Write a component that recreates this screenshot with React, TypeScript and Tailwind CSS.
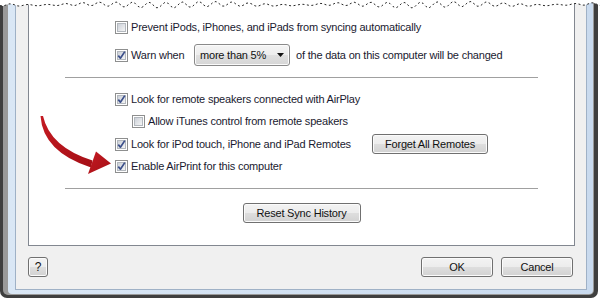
import React from "react";

const tornPts: string[] = [];
for (let x = 0; x <= 600; x += 3) {
  const y = 4.6 + 1.8 * Math.sin(x * 0.37) + 1.2 * Math.sin(x * 1.7 + 1) + 0.6 * Math.sin(x * 0.05);
  tornPts.push(`${x},${y.toFixed(1)}`);
}

function Check({ checked }: { checked?: boolean }) {
  return (
    <svg width="13" height="13" viewBox="0 0 13 13" className="shrink-0">
      <defs>
        <linearGradient id="cbg" x1="0" y1="0" x2="1" y2="1">
          <stop offset="0" stopColor="#c9ced6" />
          <stop offset="1" stopColor="#f7f7f7" />
        </linearGradient>
      </defs>
      <rect x="0.5" y="0.5" width="12" height="12" fill="#ffffff" stroke="#8e8f8f" />
      <rect x="2.5" y="2.5" width="8" height="8" fill="url(#cbg)" stroke="#b3b8be" />
      {checked && (
        <path d="M3.3 6.6 L5.4 9.2 L9.8 2.6" fill="none" stroke="#3b4f8a" strokeWidth="1.7" strokeLinejoin="round" />
      )}
    </svg>
  );
}

function WinButton({ children, className }: { children: React.ReactNode; className: string }) {
  return (
    <div
      className={`flex items-center justify-center rounded-[3px] border border-[#707070] bg-[linear-gradient(#f3f3f3_0%,#ececec_50%,#dedede_50%,#d2d2d2_100%)] shadow-[inset_0_0_0_1px_#fbfbfb] text-[#111111] ${className}`}
    >
      {children}
    </div>
  );
}

function Row({ children, className = "" }: { children: React.ReactNode; className?: string }) {
  return <div className={`flex h-[22px] items-center ${className}`}>{children}</div>;
}

export default function App() {
  return (
    <div className="relative h-[302px] w-[600px] overflow-hidden bg-white font-['Liberation_Sans',Arial,sans-serif] text-[11px] tracking-[-0.2px] text-[#1a1a30]">
      <div className="flex h-[298px] w-[598px] rounded-b-[7px] bg-[#3f3f3f] pb-[3px] pl-[3px] pr-[4px]">
        <div className="flex flex-1 rounded-b-[5px] bg-[#9a9a9a] pb-[1px] pl-[5px] pr-[1px]">
          <div className="flex flex-1 rounded-b-[4px] bg-[linear-gradient(to_right,#dae7f5,#c9daee)] pb-[4px] pl-[7px] pr-[6px]">
            <div className="flex flex-1 flex-col border-x border-b border-[#9fb1c6] bg-[#f0f0f0]">
              {/* content box */}
              <div className="ml-[12px] mr-[11px] flex h-[246px] flex-col border-x border-b border-[#828790] bg-white pl-[86px] pt-[16px]">
                <Row>
                  <Check />
                  <span className="ml-[3px]">Prevent iPods, iPhones, and iPads from syncing automatically</span>
                </Row>
                <Row className="mt-[6px]">
                  <Check checked />
                  <span className="ml-[3px] w-[63px]">Warn when</span>
                  <div className="flex h-[22px] w-[96px] items-center justify-between rounded-[3px] border border-[#8a8a8a] bg-[linear-gradient(#f4f4f4_0%,#ededed_50%,#e0e0e0_50%,#d6d6d6_100%)] pl-[5px] pr-[5px] shadow-[inset_0_0_0_1px_#fbfbfb]">
                    <span className="text-[#111]">more than 5%</span>
                    <svg width="7" height="4" viewBox="0 0 7 4">
                      <polygon points="0,0 7,0 3.5,4" fill="#111" />
                    </svg>
                  </div>
                  <span className="ml-[6px]">of the data on this computer will be changed</span>
                </Row>
                <div className="-ml-[50px] mt-[11px] h-px w-[473px] bg-[#a0a0a0]" />
                <Row className="mt-[10px]">
                  <Check checked />
                  <span className="ml-[3px]">Look for remote speakers connected with AirPlay</span>
                </Row>
                <Row className="pl-[17px]">
                  <Check />
                  <span className="ml-[3px]">Allow iTunes control from remote speakers</span>
                </Row>
                <Row className="mt-[1px]">
                  <Check checked />
                  <span className="ml-[3px] w-[241px]">Look for iPod touch, iPhone and iPad Remotes</span>
                  <WinButton className="h-[20px] w-[116px]">Forget All Remotes</WinButton>
                </Row>
                <Row>
                  <Check checked />
                  <span className="ml-[3px]">Enable AirPrint for this computer</span>
                </Row>
                <div className="-ml-[50px] mt-[11px] h-px w-[473px] bg-[#a0a0a0]" />
                <div className="-ml-[86px] mt-[14px] flex justify-center">
                  <WinButton className="h-[20px] w-[118px]">Reset Sync History</WinButton>
                </div>
              </div>
              {/* bottom buttons */}
              <div className="mt-[11px] flex items-center pl-[12px] pr-[13px]">
                <WinButton className="h-[20px] w-[20px] text-[12px] text-[#2a4a8a]">?</WinButton>
                <div className="flex-1" />
                <WinButton className="h-[20px] w-[72px]">OK</WinButton>
                <WinButton className="ml-[8px] h-[20px] w-[72px]">Cancel</WinButton>
              </div>
            </div>
          </div>
        </div>
      </div>

      {/* torn top edge */}
      <svg className="absolute left-0 top-0" width="600" height="12" viewBox="0 0 600 12">
        <polygon points={`0,0 ${tornPts.join(" ")} 600,0`} fill="#ffffff" />
        <polyline points={tornPts.join(" ")} fill="none" stroke="#2a2a2a" strokeWidth="1" strokeDasharray="2 2.5" />
      </svg>

      {/* red arrow */}
      <svg className="absolute left-0 top-0" width="600" height="302" viewBox="0 0 600 302">
        <defs>
          <linearGradient id="arr" x1="0" y1="0" x2="1" y2="1">
            <stop offset="0" stopColor="#c41a22" />
            <stop offset="1" stopColor="#a50f16" />
          </linearGradient>
        </defs>
        <path d="M40.5 116 Q43 152 91 167.5 L92.5 160.5 Q50 147 43 116 Z" fill="url(#arr)" />
        <polygon points="111,163.5 96,151.5 88,174" fill="url(#arr)" />
      </svg>
    </div>
  );
}
